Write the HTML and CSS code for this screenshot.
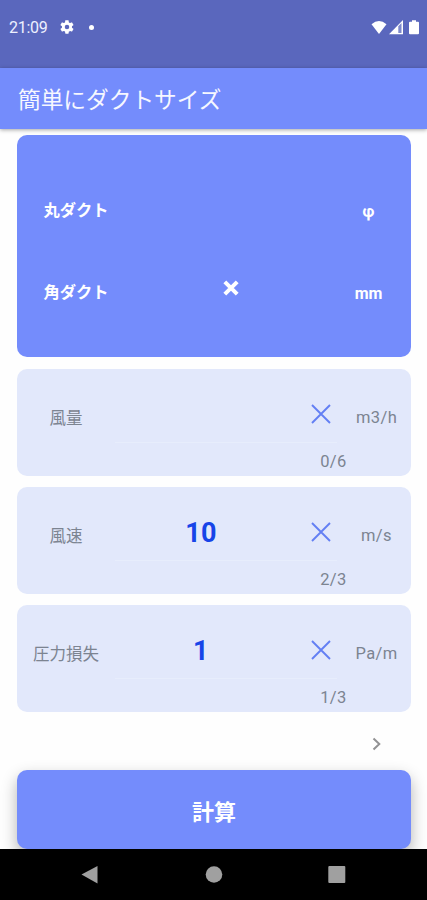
FILE: index.html
```html
<!DOCTYPE html>
<html lang="ja">
<head>
<meta charset="utf-8">
<title>簡単にダクトサイズ</title>
<link rel="stylesheet" href="styles.css">
</head>
<body>
<div class="status">
  <span class="time">21:09</span>
  <svg class="gear" viewBox="0 0 24 24"><path d="M19.4 13c.1-.3.1-.6.1-1s0-.7-.1-1l2.100-1.600c.2-.2.3-.4.1-.7l-2-3.400c-.1-.2-.4-.3-.6-.2l-2.500 1c-.5-.4-1.100-.7-1.700-1l-.4-2.600c0-.3-.2-.5-.5-.5h-4c-.2 0-.5.2-.5.4L9 5.100c-.6.2-1.100.6-1.700 1l-2.400-1c-.3-.1-.5 0-.6.2l-2 3.400c-.1.300-.1.500.1.700L4.500 11c0 .3-.1.600-.1 1s0 .7.100 1l-2.100 1.600c-.2.200-.2.400-.1.700l2 3.400c.1.200.3.300.6.200l2.400-1c.6.400 1.100.7 1.700 1l.4 2.600c0 .300.300.5.500.5h4c.3 0 .5-.2.500-.5l.4-2.600c.6-.2 1.200-.6 1.700-1l2.500 1c.2.100.5 0 .6-.2l2-3.400c.1-.3.1-.5-.1-.7zM12 15.400a3.400 3.400 0 1 1 0-6.800 3.400 3.400 0 0 1 0 6.800z" fill-rule="evenodd"/></svg>
  <span class="dot"></span>
  <svg class="signals" viewBox="0 0 50 16">
    <path d="M.5 4.200Q8 -2 15.500 4.200L8 14z"/>
    <path d="M18 14.200L32 0v14.200z"/>
    <path class="signal-off" d="M27.300 6.200L30.500 3v9.900h-3.200z"/>
    <path d="M39 1.800h2V.2h4v1.600h2q1 0 1 1v10.400q0 1-1 1h-8q-1 0-1-1V2.800q0-1 1-1z"/>
  </svg>
</div>
<header class="appbar">簡単にダクトサイズ</header>
<main class="content">
  <section class="result">
    <div class="result-row"><span class="result-label">丸ダクト</span><span></span><span class="result-unit">φ</span></div>
    <div class="result-row">
      <span class="result-label">角ダクト</span>
      <svg class="times" viewBox="0 0 16 16"><path d="M1.800 1.800l12.400 12.400M14.200 1.800L1.800 14.200"/></svg>
      <span class="result-unit">mm</span>
    </div>
  </section>
  <section class="field">
    <span class="label">風量</span><span class="value"></span>
    <svg class="clear" viewBox="0 0 20 20"><path d="M1 1l18 18M19 1L1 19"/></svg>
    <span class="unit">m3/h</span><span class="line"></span><span class="count">0/6</span>
  </section>
  <section class="field">
    <span class="label">風速</span><span class="value">10</span>
    <svg class="clear" viewBox="0 0 20 20"><path d="M1 1l18 18M19 1L1 19"/></svg>
    <span class="unit">m/s</span><span class="line"></span><span class="count">2/3</span>
  </section>
  <section class="field">
    <span class="label">圧力損失</span><span class="value">1</span>
    <svg class="clear" viewBox="0 0 20 20"><path d="M1 1l18 18M19 1L1 19"/></svg>
    <span class="unit">Pa/m</span><span class="line"></span><span class="count">1/3</span>
  </section>
  <div class="more"><svg viewBox="0 0 10 14"><path d="M1.500 1.500L7.300 7l-5.800 5.500"/></svg></div>
  <button class="calc">計算</button>
</main>
<nav class="navbar">
  <svg viewBox="0 0 427 51"><path d="M81.500 25.500L97.500 17v17.500z"/><circle cx="214" cy="25.500" r="8.300"/><rect x="328.300" y="17" width="17" height="17" rx="1"/></svg>
</nav>
</body>
</html>
```

FILE: styles.css
```css
* { box-sizing: border-box; }
body {
  margin: 0;
  width: 427px;
  height: 900px;
  overflow: hidden;
  display: flex;
  flex-direction: column;
  background: #fefefe;
  font-family: Roboto, "Noto Sans CJK JP", sans-serif;
}
.status {
  height: 67.5px;
  flex: none;
  display: flex;
  align-items: flex-start;
  padding: 19px 6px 0 9px;
  background: #5a67bd;
  color: #eef0ff;
}
.time { width: 39px; font-size: 16px; line-height: 18px; letter-spacing: -0.3px; }
.gear { width: 16px; height: 16px; margin-left: 11px; fill: #fff; }
.dot { width: 5px; height: 5px; margin: 5.500px 0 0 13.500px; border-radius: 50%; background: #fff; }
.signals { width: 50px; height: 16px; margin: 1px 0 0 auto; fill: #fff; }
.signals .signal-off { fill: #7d88cc; }
.appbar {
  height: 61px;
  flex: none;
  padding: 2px 18px 0;
  background: #748cfc;
  color: #f6f7ff;
  font-size: 22.700px;
  line-height: 61px;
  box-shadow: 0 1px 4px rgba(0, 0, 0, .35);
}
.content {
  flex: 1;
  display: flex;
  flex-direction: column;
  padding: 6px 16px 0 17px;
}
.result {
  height: 222.500px;
  flex: none;
  padding: 33px 14px 0 26.500px;
  border-radius: 10px;
  background: #748cfc;
  color: #fff;
  font-weight: 700;
}
.result-row {
  height: 82px;
  display: grid;
  grid-template-columns: 150px 74px 1fr 57px;
  align-items: center;
}
.result-label { font-size: 16.300px; }
.result-unit { grid-column: 4; text-align: center; font-size: 16px; padding-top: 5px; }
.times { width: 16px; height: 16px; margin: -6px auto 0; fill: none; stroke: #fff; stroke-width: 4; }
.field {
  height: 107px;
  flex: none;
  margin-top: 11px;
  display: grid;
  grid-template-columns: 98px 172px 67px 45px;
  grid-template-rows: 73px 1px 33px;
  align-items: center;
  border-radius: 10px;
  background: #e2e8fb;
  color: #7c8491;
}
.result + .field { margin-top: 12px; }
.label { text-align: center; font-size: 16.500px; padding-top: 22px; }
.value { text-align: center; font-size: 27px; font-weight: 700; color: #1744e8; padding-top: 18px; letter-spacing: .3px; }
.clear { width: 20px; height: 20px; margin: 17px auto 0; fill: none; stroke: #637ff3; stroke-width: 1.900; }
.unit { display: block; text-align: center; white-space: nowrap; font-size: 16.500px; letter-spacing: .4px; padding-top: 24px; }
.line { grid-column: 2 / 4; height: 1px; margin-right: 17px; background: #e7edfc; }
.count { grid-column: 1 / 4; grid-row: 3; margin-right: 7.500px; padding-top: 4px; text-align: right; font-size: 16.500px; letter-spacing: .3px; }
.more { height: 58px; flex: none; display: flex; justify-content: flex-end; padding: 25px 29px 0 0; }
.more svg { width: 10px; height: 14px; fill: none; stroke: #929294; stroke-width: 2; }
.calc {
  height: 79px;
  flex: none;
  margin: 0;
  padding: 1px 0 0;
  border: 0;
  border-radius: 10px;
  background: #748cfc;
  color: #fff;
  font: 700 22px Roboto, "Noto Sans CJK JP", sans-serif;
  box-shadow: 0 7px 16px rgba(0, 0, 0, .3);
}
.navbar { position: relative; height: 51px; flex: none; background: #000; }
.navbar svg { display: block; width: 427px; height: 51px; fill: #a0a0a0; }
```
